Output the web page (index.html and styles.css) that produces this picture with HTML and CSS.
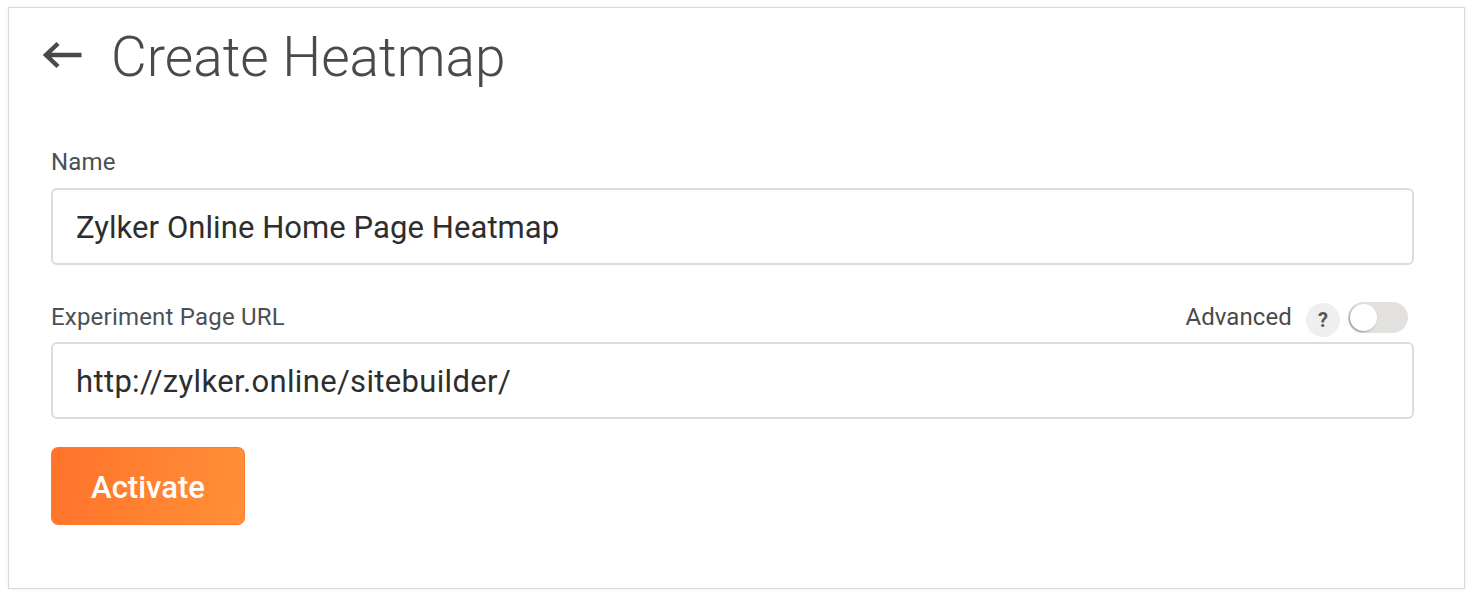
FILE: index.html
```html
<!DOCTYPE html>
<html lang="en">
<head>
<meta charset="utf-8">
<title>Create Heatmap</title>
<link rel="stylesheet" href="styles.css">
</head>
<body>
<main class="card">
  <header class="head">
    <svg class="back" viewBox="0 0 40 30" width="40" height="30" aria-hidden="true"><path d="M38.5 15H3M15 3.500L3 15l12 11.500" fill="none" stroke="#4a4a4a" stroke-width="4.500"/></svg>
    <h1 class="title">Create Heatmap</h1>
  </header>
  <form class="form">
    <div class="label-row"><label class="label">Name</label></div>
    <div class="field">Zylker Online Home Page Heatmap</div>
    <div class="label-row second">
      <label class="label">Experiment Page URL</label>
      <div class="advanced">
        <span class="adv-text">Advanced</span>
        <span class="help">?</span>
        <span class="toggle"><span class="knob"></span></span>
      </div>
    </div>
    <div class="field url">http://zylker.online/sitebuilder/</div>
    <button class="activate" type="button">Activate</button>
  </form>
</main>
</body>
</html>
```

FILE: styles.css
```css
* { box-sizing: border-box; }
html, body { margin: 0; height: 100%; background: #fff; }
body { padding: 7px 8px 9px; font-family: Roboto, "Liberation Sans", sans-serif; }
.card { height: 582px; border: 1px solid #d9d9d9; background: #fff; box-shadow: 0 0 3px rgba(0,0,0,.08); padding: 0 50px 0 34px; }
.head { display: flex; align-items: center; height: 98px; }
.back { margin-right: 28px; margin-top: -4px; flex: none; }
.title { margin: 0; font-size: 55px; font-weight: 300; color: #4a4a4a; line-height: 98px; }
.form { padding-left: 8px; margin-top: 42px; }
.label-row { display: flex; justify-content: space-between; align-items: center; height: 28px; margin-bottom: 12px; }
.label-row.second { margin-top: 38px; margin-bottom: 11px; }
.label { font-size: 24px; letter-spacing: .2px; color: #4b5057; }
.advanced { display: flex; align-items: center; margin-right: 6px; }
.adv-text { font-size: 24px; letter-spacing: .1px; color: #4a4a4a; margin-right: 14px; }
.help { width: 34px; height: 34px; border-radius: 50%; background: #efefef; color: #555; font-size: 20px; font-weight: 700; display: flex; align-items: center; justify-content: center; margin-top: 6px; margin-right: 8px; }
.toggle { width: 60px; height: 31px; border-radius: 16px; background: #e2e1df; display: block; padding: 2px; margin-top: 1px; }
.knob { display: block; width: 27px; height: 27px; border-radius: 50%; background: #fff; box-shadow: -1px 1px 2px rgba(0,0,0,.35); }
.field { height: 77px; border: 2px solid #dcdcdc; border-radius: 6px; padding: 1px 23px 0; display: flex; align-items: center; font-size: 31px; letter-spacing: .07px; color: #2e2e2e; background: #fff; }
.field.url { letter-spacing: .34px; }
.activate { display: block; margin-top: 28px; width: 194px; height: 78px; border: 1px solid #ff7a2a; border-radius: 7px; background: linear-gradient(100deg, #ff732b, #ff9038); color: #fff; font-family: inherit; font-size: 31px; font-weight: 500; padding: 3px 0 0; }
```
